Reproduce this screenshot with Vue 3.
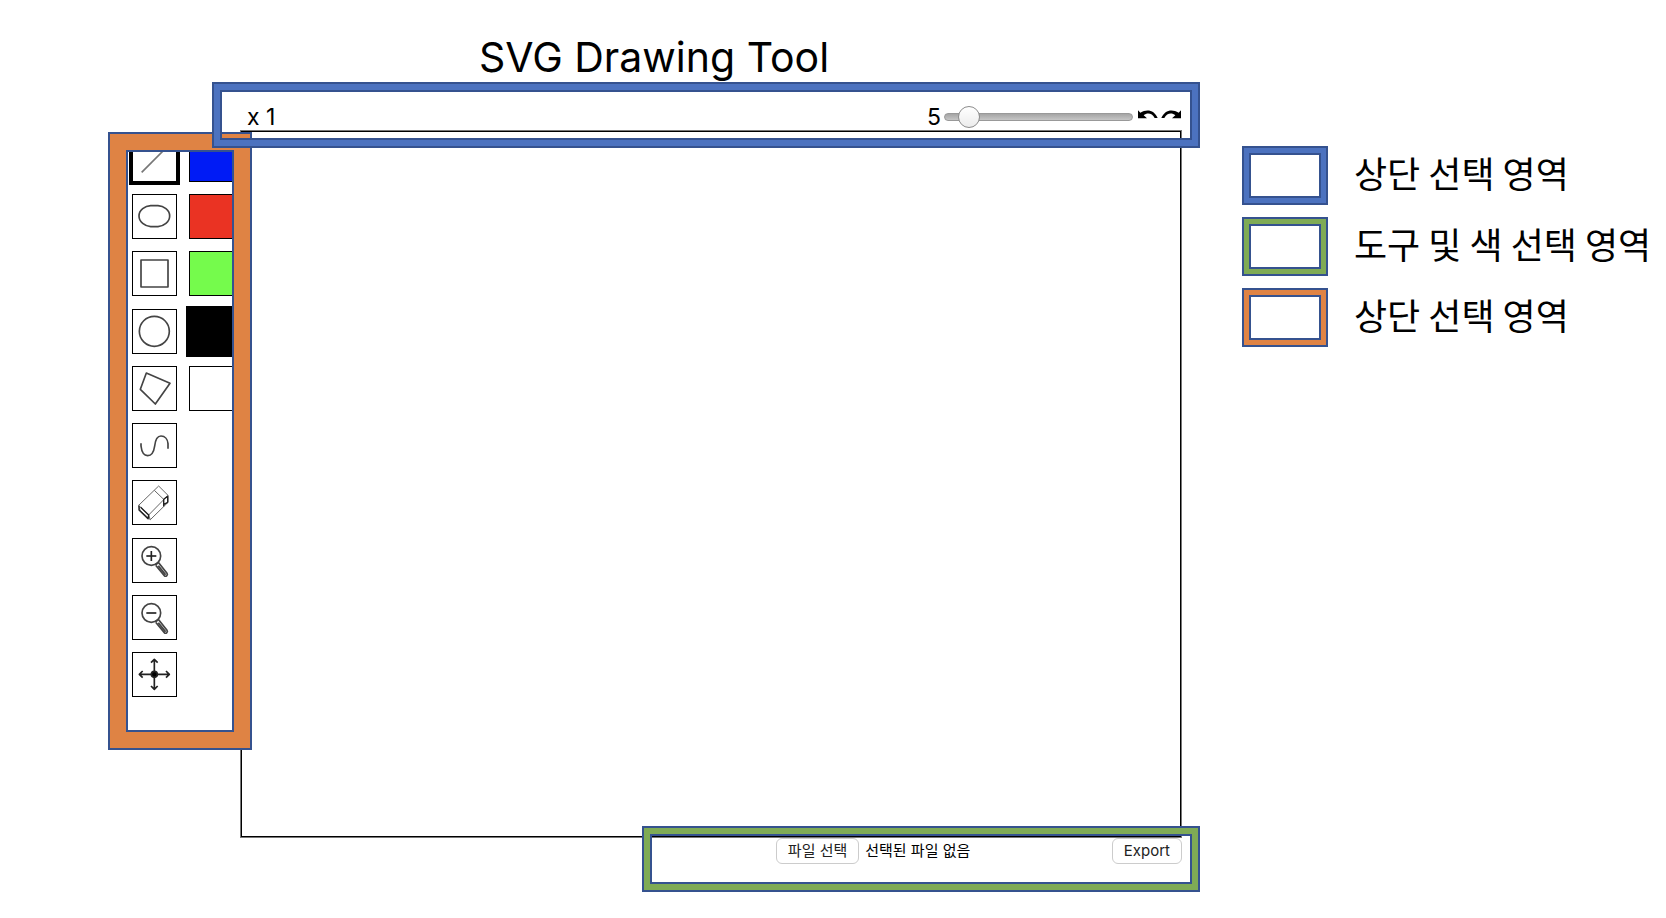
<script setup>
import { ref } from 'vue'

const tools = [
  { id: 'line', label: 'Line' },
  { id: 'ellipse', label: 'Ellipse' },
  { id: 'rect', label: 'Rectangle' },
  { id: 'circle', label: 'Circle' },
  { id: 'polygon', label: 'Polygon' },
  { id: 'path', label: 'Path' },
  { id: 'eraser', label: 'Eraser' },
  { id: 'zoom-in', label: 'Zoom in' },
  { id: 'zoom-out', label: 'Zoom out' },
  { id: 'move', label: 'Move' },
]
const colors = ['blue', 'red', 'lime', 'black', 'white']
const legend = [
  { tone: 'tone-blue', text: '상단 선택 영역' },
  { tone: 'tone-green', text: '도구 및 색 선택 영역' },
  { tone: 'tone-orange', text: '상단 선택 영역' },
]

const tool = ref('line')
const color = ref('black')
const strokeWidth = ref(5)
</script>

<template>
  <div class="page">
    <main class="editor">
      <h1 class="title">SVG Drawing Tool</h1>

      <aside class="panel">
        <div class="panel-view">
          <div class="palette">
            <button
              v-for="t in tools"
              :key="t.id"
              type="button"
              class="cell tool"
              :class="{ selected: tool === t.id }"
              :aria-label="t.label"
              @click="tool = t.id"
            >
              <svg viewBox="0 0 135 135" class="icon" aria-hidden="true">
                <path v-if="t.id === 'line'" class="soft" d="M29 106 L106 29" />
                <path
                  v-else-if="t.id === 'ellipse'"
                  d="M56 35 H78 C95 36 113 48 113 66 C113 84 95 97 78 98 H56 C39 97 21 84 21 66 C21 48 39 36 56 35 Z"
                />
                <rect v-else-if="t.id === 'rect'" x="27" y="27" width="81" height="81" />
                <circle v-else-if="t.id === 'circle'" cx="67" cy="67" r="45" />
                <path v-else-if="t.id === 'polygon'" d="M43 21 L114 52 L70 114 L25 70 Z" />
                <path
                  v-else-if="t.id === 'path'"
                  d="M27 61 V69 C29 86 36 98 47 98 C60 98 66 83 68 69 C70 51 77 39 87 39 C99 39 107 49 108 62 V77"
                />
                <g v-else-if="t.id === 'eraser'">
                  <path class="thin" d="M20 76 L80 18 L108 46 L50 105 Z M67 31 L95 58 M108 46 V67 L55 119 L24 91 L20 76 M50 105 L55 119 M95 58 V80" />
                  <path class="bold" d="M21 77 V90 L48 116 M26 82 L50 105 L48 118 M95 57 V79 M95 58 L107 49 V67 L96 73" />
                </g>
                <g v-else-if="t.id === 'zoom-in' || t.id === 'zoom-out'">
                  <circle cx="58" cy="54" r="28" />
                  <path class="dark" d="M43 54 H73" />
                  <path v-if="t.id === 'zoom-in'" class="dark" d="M58 39 V69" />
                  <path d="M70 81 L77 75 L81 72 M71 82 L97 113 C101 118 109 112 105 106 L80 74 M79 83 L101 110" />
                </g>
                <g v-else class="dark">
                  <path d="M67 22 V112 M22 67 H112 M57 32 L67 22 L77 32 M57 102 L67 112 L77 102 M32 57 L22 67 L32 77 M102 57 L112 67 L102 77" />
                  <circle class="dot" cx="67" cy="67" r="9" />
                </g>
              </svg>
            </button>
            <button
              v-for="c in colors"
              :key="c"
              type="button"
              class="cell color"
              :class="[c, { selected: color === c }]"
              :aria-label="c"
              @click="color = c"
            ></button>
          </div>
        </div>
      </aside>

      <section class="board">
        <div class="toolbar">
          <span class="scale">x 1</span>
          <label class="size" for="stroke-width">{{ strokeWidth }}</label>
          <input id="stroke-width" v-model="strokeWidth" class="slider" type="range" min="1" max="50" />
          <button type="button" class="history" aria-label="Undo">
            <svg viewBox="0 0 66 36" aria-hidden="true">
              <path d="M3 4 L10 11 C31 -1 52 4 62 27 H53 C45 11 30 10 20 19 L30 28 H3 Z" />
            </svg>
          </button>
          <button type="button" class="history" aria-label="Redo">
            <svg viewBox="0 0 66 36" aria-hidden="true">
              <path d="M63 4 L56 11 C35 -1 14 4 4 27 H13 C21 11 36 10 46 19 L36 28 H63 Z" />
            </svg>
          </button>
          <div class="frame toolbar-frame tone-blue"></div>
        </div>
        <div class="canvas"></div>
        <div class="footer">
          <div class="picker">
            <input id="file" class="file" type="file" />
            <label class="btn" for="file">파일 선택</label>
            <span>선택된 파일 없음</span>
          </div>
          <button type="button" class="btn">Export</button>
          <div class="frame footer-frame tone-green"></div>
        </div>
      </section>
    </main>

    <ul class="legend">
      <li v-for="(item, i) in legend" :key="i">
        <span class="frame swatch" :class="item.tone"></span>
        <span class="caption">{{ item.text }}</span>
      </li>
    </ul>
  </div>
</template>

<style>
body {
  margin: 0;
  background: #fff;
}
</style>

<style scoped>
.page {
  display: flex;
  box-sizing: border-box;
  min-height: 100vh;
  padding-left: 108px;
  color: #000;
  font-family: Inter, "Noto Sans CJK KR", sans-serif;
}
button {
  padding: 0;
  font: inherit;
  color: inherit;
}
.editor {
  flex: 1;
  display: grid;
  grid-template-columns: 132px 1fr;
  grid-template-rows: 82px auto;
  align-content: start;
}
.title {
  grid-column: 1 / -1;
  margin: 0;
  padding-top: 31px;
  font-size: 41px;
  font-weight: 400;
  line-height: 52px;
  text-align: center;
}

/* Tool and colour panel */
.panel {
  position: relative;
  z-index: 1;
  box-sizing: border-box;
  align-self: start;
  margin: 50px -12px 0 0;
  padding: 16px;
  border: 2px solid #35528f;
  background: #df8344;
}
.panel-view {
  height: 578px;
  overflow: hidden;
  border: 2px solid #35528f;
  background: #fff;
}
.palette {
  display: grid;
  grid-template: repeat(10, 45px) / repeat(2, 45px);
  grid-auto-flow: column;
  align-content: space-between;
  column-gap: 12px;
  height: 560px;
  margin: -15px 0 0 4px;
}
.cell {
  box-sizing: border-box;
  border: 1px solid #000;
  background: #fff;
}
.selected {
  outline: 3px solid #000;
}
.blue { background: #001bf5; }
.red { background: #ea3323; }
.lime { background: #75fb4c; }
.black { background: #000; }
.white { background: #fff; }
.icon {
  display: block;
  width: 45px;
  height: 45px;
  margin: -1px;
  fill: none;
  stroke: #444;
  stroke-width: 5;
  stroke-linejoin: round;
}
.soft { stroke: #777; }
.thin { stroke: #666; stroke-width: 3; }
.bold { stroke: #222; stroke-width: 4; }
.dark { stroke: #222; }
.dot { fill: #000; }

/* Drawing board */
.board {
  margin-right: 18px;
}
.toolbar {
  position: relative;
  z-index: 2;
  display: flex;
  align-items: center;
  box-sizing: border-box;
  height: 48px;
  padding: 22px 0 0 7px;
  font-size: 23px;
  line-height: 26px;
}
.scale {
  flex: 1;
}
.slider {
  appearance: none;
  width: 189px;
  height: 24px;
  margin: 0 4px 0 3px;
  background: transparent;
}
.slider::-webkit-slider-runnable-track {
  box-sizing: border-box;
  height: 8px;
  border: 1px solid #999;
  border-radius: 4px;
  background: linear-gradient(#a5a5a5, #c6c6c6);
}
.slider::-webkit-slider-thumb {
  appearance: none;
  box-sizing: border-box;
  width: 22px;
  height: 22px;
  margin-top: -8px;
  border: 1px solid #8c8c8c;
  border-radius: 50%;
  background: linear-gradient(#fff, #ececec);
}
.history {
  width: 22px;
  height: 12px;
  margin-bottom: 5px;
  border: 0;
  background: none;
}
.history + .history {
  margin-left: 1px;
}
.history svg {
  display: block;
  width: 22px;
  height: 12px;
}
.canvas {
  box-sizing: border-box;
  height: 708px;
  border: 1px solid #777;
  box-shadow: inset 0 0 0 1px #000;
}
.footer {
  position: relative;
  display: flex;
  justify-content: flex-end;
  font-size: 15px;
  line-height: 24px;
}
.picker {
  display: flex;
  align-items: center;
  gap: 6px;
  width: 336px;
}
.file {
  position: absolute;
  width: 1px;
  height: 1px;
  opacity: 0;
}
.btn {
  box-sizing: border-box;
  height: 26px;
  padding: 0 11px;
  border: 1px solid #ccc;
  border-radius: 6px;
  background: #fff;
  color: #222;
}

/* Highlight frames */
.frame {
  --band: 6px;
  --edge: 8px;
  box-sizing: border-box;
  border: 2px solid #35528f;
  box-shadow: inset 0 0 0 var(--band) var(--tone), inset 0 0 0 var(--edge) #35528f;
  pointer-events: none;
}
.tone-blue { --tone: #4c72bf; }
.tone-green { --tone: #7fab55; }
.tone-orange { --tone: #df8344; }
.toolbar-frame {
  position: absolute;
  inset: 0 -18px -18px -28px;
}
.footer-frame {
  position: absolute;
  top: -12px;
  right: -18px;
  width: 558px;
  height: 66px;
}

.legend {
  display: flex;
  flex-direction: column;
  gap: 12px;
  box-sizing: border-box;
  width: 424px;
  margin: 0 0 0 42px;
  padding: 146px 0 0;
  list-style: none;
}
.legend li {
  display: flex;
  align-items: center;
  gap: 26px;
}
.swatch {
  --band: 5px;
  --edge: 7px;
  flex: none;
  width: 86px;
  height: 59px;
}
.caption {
  padding-bottom: 8px;
  font-size: 36px;
  line-height: 50px;
  white-space: nowrap;
  font-family: "Noto Sans CJK KR", sans-serif;
}
</style>
